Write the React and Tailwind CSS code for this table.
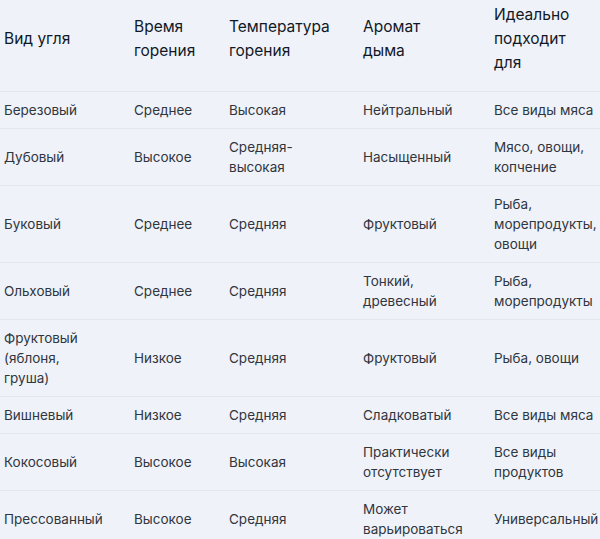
const rows = [
  ["Березовый", "Среднее", "Высокая", "Нейтральный", "Все виды мяса"],
  ["Дубовый", "Высокое", "Средняя-высокая", "Насыщенный", "Мясо, овощи, копчение"],
  ["Буковый", "Среднее", "Средняя", "Фруктовый", "Рыба, морепродукты, овощи"],
  ["Ольховый", "Среднее", "Средняя", "Тонкий, древесный", "Рыба, морепродукты"],
  ["Фруктовый (яблоня, груша)", "Низкое", "Средняя", "Фруктовый", "Рыба, овощи"],
  ["Вишневый", "Низкое", "Средняя", "Сладковатый", "Все виды мяса"],
  ["Кокосовый", "Высокое", "Высокая", "Практически отсутствует", "Все виды продуктов"],
  ["Прессованный", "Высокое", "Средняя", "Может варьироваться", "Универсальный"],
];

const headers = [
  ["Вид угля"],
  ["Время", "горения"],
  ["Температура", "горения"],
  ["Аромат", "дыма"],
  ["Идеально", "подходит", "для"],
];

// column widths + right padding so the text wraps like the original
const cols = [
  { w: "w-[130px]", pr: "pr-[24px]" },
  { w: "w-[95px]", pr: "pr-4" },
  { w: "w-[134px]", pr: "pr-[22px]" },
  { w: "w-[131px]", pr: "pr-[26px]" },
  { w: "w-[116px]", pr: "pr-[10px]" },
];

export default function App() {
  return (
    <div
      className="min-h-screen bg-[#eff2f8] overflow-hidden"
      style={{ fontFamily: "Inter, 'Noto Sans', sans-serif" }}
    >
      <table className="table-fixed border-collapse w-[606px]">
        <colgroup>
          {cols.map((c, i) => (
            <col key={i} className={c.w} />
          ))}
        </colgroup>
        <thead>
          <tr className="border-b border-[#e3e7ee]">
            {headers.map((h, i) => (
              <th
                key={i}
                className={`text-left align-middle font-normal text-[15.5px] leading-6 text-[#111827] pl-1 pt-[3px] pb-[16px] ${cols[i].pr}`}
              >
                {h.map((line, li) => (
                  <span key={li} className="block whitespace-nowrap">
                    {line}
                  </span>
                ))}
              </th>
            ))}
          </tr>
        </thead>
        <tbody>
          {rows.map((r, ri) => (
            <tr key={ri} className="border-b border-[#e3e7ee]">
              {r.map((cell, ci) => (
                <td
                  key={ci}
                  className={`align-middle text-[13.5px] leading-5 text-[#2f3640] pl-1 py-2 ${cols[ci].pr}`}
                >
                  {cell}
                </td>
              ))}
            </tr>
          ))}
        </tbody>
      </table>
    </div>
  );
}
